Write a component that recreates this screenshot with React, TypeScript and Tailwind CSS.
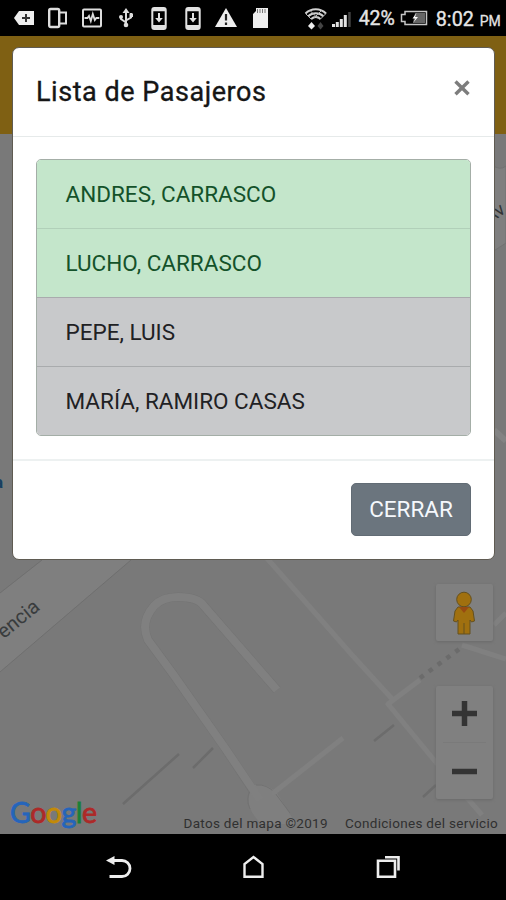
import type { ReactNode } from 'react'

interface Passenger {
  name: string
  onBoard: boolean
}

const passengers: Passenger[] = [
  { name: 'ANDRES, CARRASCO', onBoard: true },
  { name: 'LUCHO, CARRASCO', onBoard: true },
  { name: 'PEPE, LUIS', onBoard: false },
  { name: 'MARÍA, RAMIRO CASAS', onBoard: false },
]

export default function App() {
  return (
    <div className="relative flex h-[900px] w-[506px] flex-col overflow-hidden bg-black font-['Roboto',sans-serif]">
      <StatusBar />
      <div className="h-[98px] shrink-0 bg-[#7f6013]" />
      <MapView />
      <NavBar />
      <PassengerModal />
    </div>
  )
}

function PassengerModal() {
  return (
    <div className="absolute top-[47px] left-[12px] w-[483px] rounded-[7px] border border-[#5f5b52] bg-white">
      <div className="flex h-[89px] items-start justify-between border-b border-[#e6eaea] pt-[23px] pr-[23px] pl-[23px]">
        <h5 className="text-[27px] leading-[42px] tracking-[0.54px] text-[#161616] [-webkit-text-stroke:0.35px_#161616]">
          Lista de Pasajeros
        </h5>
        <button className="mt-[8px] flex h-[18px] w-[18px] items-center justify-center" aria-label="Cerrar">
          <svg className="h-[18px] w-[18px]" viewBox="0 0 18 18" stroke="#7d7d7d" strokeWidth="3.4">
            <path d="M2.5 2.5 15.5 15.3M15.5 2.5 2.5 15.3" />
          </svg>
        </button>
      </div>
      <div className="px-[23px] pt-[22px] pb-[23px]">
        <ul className="overflow-hidden rounded-[5px] border border-[#a4aea7]">
          {passengers.map((p, i) => (
            <Row key={p.name} passenger={p} first={i === 0} />
          ))}
        </ul>
      </div>
      <div className="flex h-[100px] items-start justify-end border-t-2 border-[#edf1f1] px-[23px] pt-[22px]">
        <button className="h-[53px] w-[120px] rounded-[5px] border border-[#626c75] bg-[#6b757e] text-[22.5px] text-[#f5f8fc]">
          CERRAR
        </button>
      </div>
    </div>
  )
}

function Row({ passenger, first }: { passenger: Passenger; first: boolean }) {
  const color = passenger.onBoard
    ? 'bg-[#c4e6cb] text-[#14522a] border-[#b1d0b9]'
    : 'bg-[#c8c9cb] text-[#1f2124] border-[#a9abad]'
  return (
    <li className={`flex items-center pt-[2px] pl-[28.5px] text-[22.5px] ${first ? 'h-[68px]' : 'h-[69px] border-t'} ${color}`}>
      {passenger.name}
    </li>
  )
}

function StatusBar() {
  return (
    <div className="flex h-[36px] shrink-0 items-center bg-black pl-[8px] text-[#e9e9e9]">
      <Slot>
        <path d="M6 6h15v14H6L1 13Z" fill="#eee" />
        <path d="M13 9v8M9 13h8" stroke="#333" strokeWidth="2" />
      </Slot>
      <Slot>
        <rect x="3.2" y="4" width="10" height="18" rx="1.5" stroke="#ddd" strokeWidth="2.4" />
        <path d="M14 7.5h6v11h-6" stroke="#ddd" strokeWidth="2" />
      </Slot>
      <Slot>
        <rect x="3" y="4.5" width="18" height="17" rx="1" stroke="#ddd" strokeWidth="2" />
        <path d="M4.5 13h3l1.500-2 1.800 5 2-7 2 6 1.500-2h3" stroke="#ddd" strokeWidth="1.8" />
      </Slot>
      <Slot>
        <path d="M12 6v14M12 17.5 7 14v-3M12 15.5l5-3V8" stroke="#ddd" strokeWidth="2" />
        <path d="m12 3 3.5 5h-7Z" fill="#ddd" />
        <circle cx="12" cy="20" r="2.3" fill="#ddd" />
        <circle cx="7" cy="12" r="2" fill="#ddd" />
        <path d="M15.5 8.5h3.500v3.500h-3.500Z" fill="#ddd" />
      </Slot>
      <Slot><PhoneDownload /></Slot>
      <Slot><PhoneDownload /></Slot>
      <Slot>
        <path d="M12 3 23 22H1Z" fill="#eee" />
        <path d="M12 9v6.5M12 17.5V20" stroke="#222" strokeWidth="2.2" />
      </Slot>
      <Slot>
        <path d="M8 3h12v20H5V9l3-3Z" fill="#eee" />
        <path d="M9.5 4v4M12 4v4M14.5 4v4M17 4v4" stroke="#777" strokeWidth="1" />
      </Slot>
      <svg className="ml-[27px] h-[26px] w-[24px]" viewBox="0 0 24 26" fill="none">
        <path d="M1.5 8.5c5.500-5.800 15-5.800 20.500 0M4.300 11.200c4-4 11-4 15 0M7.300 14c2.500-2.600 6.600-2.600 9.100 0" stroke="#d0d0d0" strokeWidth="2" />
        <path d="M1.5 8.5 7.5 14.5M22 8.500l-6 6M6 5.500l8 8M17.500 5.500l-8 8" stroke="#b5b5b5" strokeWidth="1" />
        <path d="m7.5 17 3.500 4-3.500 3.500L4 21Z" fill="#eee" />
        <path d="m16.5 17 3 4-3 3.500-3-3.500Z" fill="#444" />
      </svg>
      <svg className="ml-[3px] h-[26px] w-[22px]" viewBox="0 0 22 26" fill="#e2e2e2">
        <path d="M1 19h3v3H1zM4.800 17h3v5h-3zM8.800 14h3v8h-3zM12.800 10h3v12h-3z" />
        <path d="M17.2 7h2.500v15h-2.500z" fill="#444" />
      </svg>
      <span className="ml-[6px] w-[38px] pt-[2px] text-[19.5px] leading-none tracking-[-0.1px] [-webkit-text-stroke:0.4px_#ddd]">42%</span>
      <svg className="ml-[3px] h-[16px] w-[28px]" viewBox="0 0 28 16" fill="none">
        <path d="M5 1.5h21.500v13H5v-3H1.500v-7H5Z" stroke="#c5c5c5" strokeWidth="1.5" />
        <path d="M15 3h10v10H13Z" fill="#666" />
        <path d="m16.500 3-4 5.500h3L13 13l5-6h-3Z" fill="#fff" />
      </svg>
      <span className="ml-[8px] w-[40px] pt-[3px] text-[19.8px] leading-none [-webkit-text-stroke:0.4px_#ddd]">8:02</span>
      <span className="ml-[4px] pt-[6px] text-[14px] leading-none [-webkit-text-stroke:0.3px_#ddd]">PM</span>
    </div>
  )
}

function Slot({ children }: { children: ReactNode }) {
  return (
    <span className="flex w-[33.6px] shrink-0 justify-center">
      <svg className="h-[26px] w-[24px]" viewBox="0 0 24 26" fill="none">{children}</svg>
    </span>
  )
}

function PhoneDownload() {
  return (
    <>
      <rect x="5.3" y="3" width="13.4" height="21" rx="2" stroke="#e2e2e2" strokeWidth="2" />
      <path d="M5 4.800h14M5 21.500h14" stroke="#e2e2e2" strokeWidth="3" />
      <path d="M12 8v6" stroke="#e2e2e2" strokeWidth="2" />
      <path d="M8.200 13h7.600L12 17.500Z" fill="#e2e2e2" />
    </>
  )
}

function MapView() {
  return (
    <div className="relative h-[700px] shrink-0 overflow-hidden bg-[#797979]">
      <svg className="block h-[700px] w-[506px]" viewBox="0 134 506 700" fill="none">
        <path d="M0 593 42 560 131 560 0 672Z" fill="#7f7f7f" />
        <path d="M0 593 42 560M131 560 0 672" stroke="#6f6f6f" />
        {/* streets: dark casing under a lighter fill */}
        <g stroke="#747474" strokeWidth="9" strokeLinejoin="round">
          <path d="M277 690 204 606Q198 597 178 597 162 597 154 606 140 622 148 640L173 674 225 748 258 798" />
        </g>
        <path d="M254 785Q246 796 250 808 254 818 262 824H296L277 793Q268 783 254 785Z" fill="#7f7f7f" />
        <path d="M251 788Q245 799 250 809M256 785Q267 784 275 793L290 813" stroke="#727272" />
        <g stroke="#808080" strokeLinejoin="round">
          <path d="M277 690 204 606Q198 597 178 597 162 597 154 606 140 622 148 640L173 674 225 748 260 800" strokeWidth="8" />
          <path d="M265 556 352 655 394 701M420 680 388 704 434 760 482 815M462 645 506 659M494 625 506 613M272 794 343 738" strokeWidth="5" />
        </g>
        <path d="M420 678 462 647" stroke="#6b6b6b" strokeWidth="4.5" strokeDasharray="4.5 6.5" />
        <path d="M123 804 179 754M193 768 213 748M374 741 394 725M423 797 436 785" stroke="#6c6c6c" strokeWidth="2.5" />
        <path d="M494 430 506 441" stroke="#838383" strokeWidth="6" />
        <path d="M492 165Q500 171 506 166V243Q500 247 492 252Z" fill="#7f7f7f" stroke="#727272" />
        <text x="41" y="609" textAnchor="end" transform="rotate(-39 41 609)" fontSize="20" fill="#393c3d">encia</text>
        <text x="490" y="224" transform="rotate(-36 490 224)" fontSize="18" fill="#303334">Av</text>
        <text x="3" y="488" textAnchor="end" fontSize="17" fontWeight="700" fill="#173f60">a</text>
      </svg>

      <div className="absolute top-[450px] right-[13px] flex h-[57px] w-[57px] items-center justify-center rounded-[2px] bg-[#808080] shadow-[0_1px_3px_#6a6a6a]">
        <Pegman />
      </div>
      <div className="absolute top-[552px] right-[13px] flex h-[113px] w-[57px] flex-col items-center rounded-[2px] bg-[#808080] shadow-[0_1px_3px_#6a6a6a]">
        <svg className="h-[56px] w-[57px] shrink-0" viewBox="0 0 57 56" stroke="#343434" strokeWidth="5.5">
          <path d="M16 27.500h25M28.500 15v25" />
        </svg>
        <div className="h-px w-[43px] shrink-0 bg-[#7a7a7a]" />
        <svg className="h-[56px] w-[57px] shrink-0" viewBox="0 0 57 56" stroke="#343434" strokeWidth="5.5">
          <path d="M16 28.500h25" />
        </svg>
      </div>

      <div className="absolute bottom-[3px] left-[10px] flex h-[38px] items-center font-['Lato',sans-serif] text-[28.5px] leading-none tracking-[-0.5px]">
        <GoogleText />
      </div>
      <div className="absolute right-[8px] bottom-[2px] flex gap-[17px] text-[13.5px] leading-[18px] tracking-[0.3px] whitespace-nowrap text-[#303030]">
        <span>Datos del mapa ©2019</span>
        <span>Condiciones del servicio</span>
      </div>
    </div>
  )
}

function GoogleText() {
  return (
    <span className="[-webkit-text-stroke:0.8px_currentColor]">
      <span className="text-[#2565bb]">G</span>
      <span className="text-[#ad2928]">o</span>
      <span className="text-[#c38a08]">o</span>
      <span className="text-[#2565bb]">g</span>
      <span className="text-[#188039]">l</span>
      <span className="text-[#ad2928]">e</span>
    </span>
  )
}

function Pegman() {
  return (
    <svg className="mr-[2px] h-[44px] w-[26px]" viewBox="0 0 26 44" fill="#a0700f" stroke="#64501f" strokeWidth="1">
      <path d="M7 16h12l3 4 1.500 10-3 1-1.500-2v14H7V29l-1.500 2-3-1L4 20Z" />
      <path d="M13 32v11" />
      <circle cx="13" cy="8.5" r="7.3" />
      <path d="M8 16h10l-5 6Z" fill="#984b12" stroke="none" />
    </svg>
  )
}

function NavBar() {
  return (
    <div className="flex h-[66px] shrink-0 items-center bg-black pl-[105px]">
      <svg className="h-[26px] w-[28px]" viewBox="0 0 28 26" fill="none">
        <path d="M5 6.500h12a8 8 0 0 1 0 16H4.500" stroke="#eee" strokeWidth="2.8" />
        <path d="M1 6.500 9.500 2v9Z" fill="#eee" />
      </svg>
      <svg className="ml-[107px] h-[26px] w-[28px]" viewBox="0 0 28 26" fill="none" stroke="#eee" strokeWidth="2.4">
        <path d="M4.500 22.800V10L13.500 3l9 7v12.800Z" />
      </svg>
      <svg className="ml-[107px] h-[26px] w-[28px]" viewBox="0 0 28 26" fill="none" stroke="#eee" strokeWidth="2.6">
        <path d="M3 6.800h17v16H3ZM10 3.200h13.500v13.300" />
      </svg>
    </div>
  )
}
